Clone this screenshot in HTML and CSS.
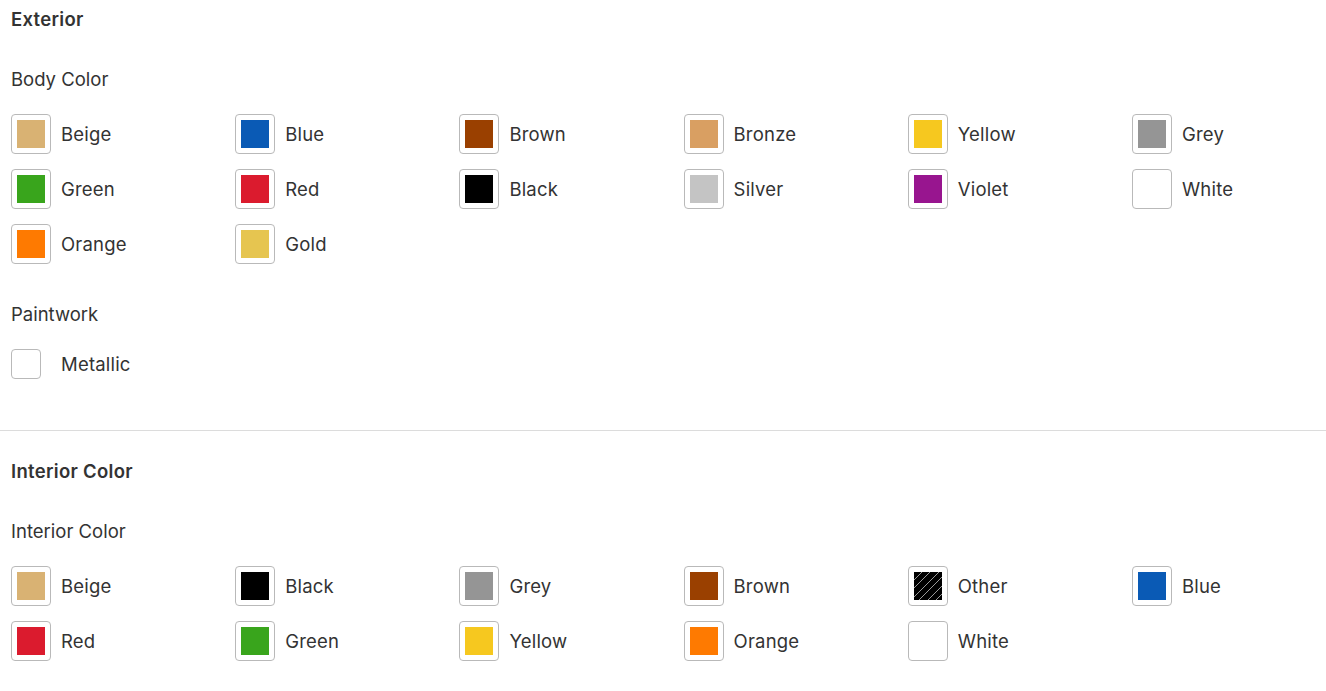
FILE: index.html
```html
<!DOCTYPE html>
<html lang="en">
<head>
<meta charset="utf-8">
<title>Colors</title>
<link rel="stylesheet" href="styles.css">
</head>
<body>
<section class="section section-first">
  <h2 class="heading">Exterior</h2>
  <h3 class="subheading">Body Color</h3>
  <div class="grid">
    <label class="option"><span class="swatch"><span class="fill c-beige"></span></span><span class="label">Beige</span></label>
    <label class="option"><span class="swatch"><span class="fill c-blue"></span></span><span class="label">Blue</span></label>
    <label class="option"><span class="swatch"><span class="fill c-brown"></span></span><span class="label">Brown</span></label>
    <label class="option"><span class="swatch"><span class="fill c-bronze"></span></span><span class="label">Bronze</span></label>
    <label class="option"><span class="swatch"><span class="fill c-yellow"></span></span><span class="label">Yellow</span></label>
    <label class="option"><span class="swatch"><span class="fill c-grey"></span></span><span class="label">Grey</span></label>
    <label class="option"><span class="swatch"><span class="fill c-green"></span></span><span class="label">Green</span></label>
    <label class="option"><span class="swatch"><span class="fill c-red"></span></span><span class="label">Red</span></label>
    <label class="option"><span class="swatch"><span class="fill c-black"></span></span><span class="label">Black</span></label>
    <label class="option"><span class="swatch"><span class="fill c-silver"></span></span><span class="label">Silver</span></label>
    <label class="option"><span class="swatch"><span class="fill c-violet"></span></span><span class="label">Violet</span></label>
    <label class="option"><span class="swatch"><span class="fill c-white"></span></span><span class="label">White</span></label>
    <label class="option"><span class="swatch"><span class="fill c-orange"></span></span><span class="label">Orange</span></label>
    <label class="option"><span class="swatch"><span class="fill c-gold"></span></span><span class="label">Gold</span></label>
  </div>
  <h3 class="subheading subheading-gap">Paintwork</h3>
  <div class="checkrow">
    <label class="option option-check"><span class="checkbox"></span><span class="label">Metallic</span></label>
  </div>
</section>
<section class="section section-second">
  <h2 class="heading">Interior Color</h2>
  <h3 class="subheading">Interior Color</h3>
  <div class="grid">
    <label class="option"><span class="swatch"><span class="fill c-beige"></span></span><span class="label">Beige</span></label>
    <label class="option"><span class="swatch"><span class="fill c-black"></span></span><span class="label">Black</span></label>
    <label class="option"><span class="swatch"><span class="fill c-grey"></span></span><span class="label">Grey</span></label>
    <label class="option"><span class="swatch"><span class="fill c-brown"></span></span><span class="label">Brown</span></label>
    <label class="option"><span class="swatch"><span class="fill c-other"></span></span><span class="label">Other</span></label>
    <label class="option"><span class="swatch"><span class="fill c-blue"></span></span><span class="label">Blue</span></label>
    <label class="option"><span class="swatch"><span class="fill c-red"></span></span><span class="label">Red</span></label>
    <label class="option"><span class="swatch"><span class="fill c-green"></span></span><span class="label">Green</span></label>
    <label class="option"><span class="swatch"><span class="fill c-yellow"></span></span><span class="label">Yellow</span></label>
    <label class="option"><span class="swatch"><span class="fill c-orange"></span></span><span class="label">Orange</span></label>
    <label class="option"><span class="swatch"><span class="fill c-white"></span></span><span class="label">White</span></label>
  </div>
</section>
</body>
</html>
```

FILE: styles.css
```css
html, body {
  margin: 0;
  padding: 0;
  background: #fff;
}
body {
  font-family: Inter, "Noto Sans", "Liberation Sans", sans-serif;
  color: #333;
  overflow: hidden;
}
.section {
  padding: 0 11px;
}
.section-first {
  padding-top: 7px;
  padding-bottom: 51px;
  border-bottom: 1px solid #dcdcdc;
}
.section-second {
  padding-top: 28px;
}
.heading {
  margin: 0;
  font-size: 18.5px;
  line-height: 24px;
  font-weight: 600;
  letter-spacing: 0.3px;
}
.subheading {
  margin: 36px 0 0;
  font-size: 18.5px;
  line-height: 24px;
  font-weight: 400;
  letter-spacing: 0;
}
.subheading-gap {
  margin-top: 38px;
}
.grid {
  margin-top: 23px;
  display: grid;
  grid-template-columns: repeat(6, 224.2px);
  row-gap: 15px;
}
.option {
  display: flex;
  align-items: center;
  height: 40px;
}
.swatch {
  box-sizing: border-box;
  width: 40px;
  height: 40px;
  border: 1px solid #b9b9b9;
  border-radius: 4px;
  padding: 5px;
  flex: none;
}
.fill {
  display: block;
  width: 28px;
  height: 28px;
}
.label {
  margin-left: 10px;
  font-size: 18.5px;
  line-height: 24px;
  letter-spacing: 0.2px;
}
.checkrow {
  margin-top: 23px;
}
.option-check {
  height: 30px;
}
.checkbox {
  box-sizing: border-box;
  width: 30px;
  height: 30px;
  border: 1px solid #b9b9b9;
  border-radius: 4px;
  flex: none;
}
.option-check .label {
  margin-left: 20px;
}
.c-beige { background: #d9b273; }
.c-blue { background: #0a5ab5; }
.c-brown { background: #9a4000; }
.c-bronze { background: #d99f62; }
.c-yellow { background: #f6c81f; }
.c-grey { background: #959595; }
.c-green { background: #39a51c; }
.c-red { background: #db1b2e; }
.c-black { background: #000; }
.c-silver { background: #c4c4c4; }
.c-violet { background: #98158f; }
.c-white { background: #fff; }
.c-orange { background: #fe7a01; }
.c-gold { background: #e6c550; }
.c-other {
  background: repeating-linear-gradient(135deg, #000 0 5px, #9a9a9a 5px 6px);
}
```
